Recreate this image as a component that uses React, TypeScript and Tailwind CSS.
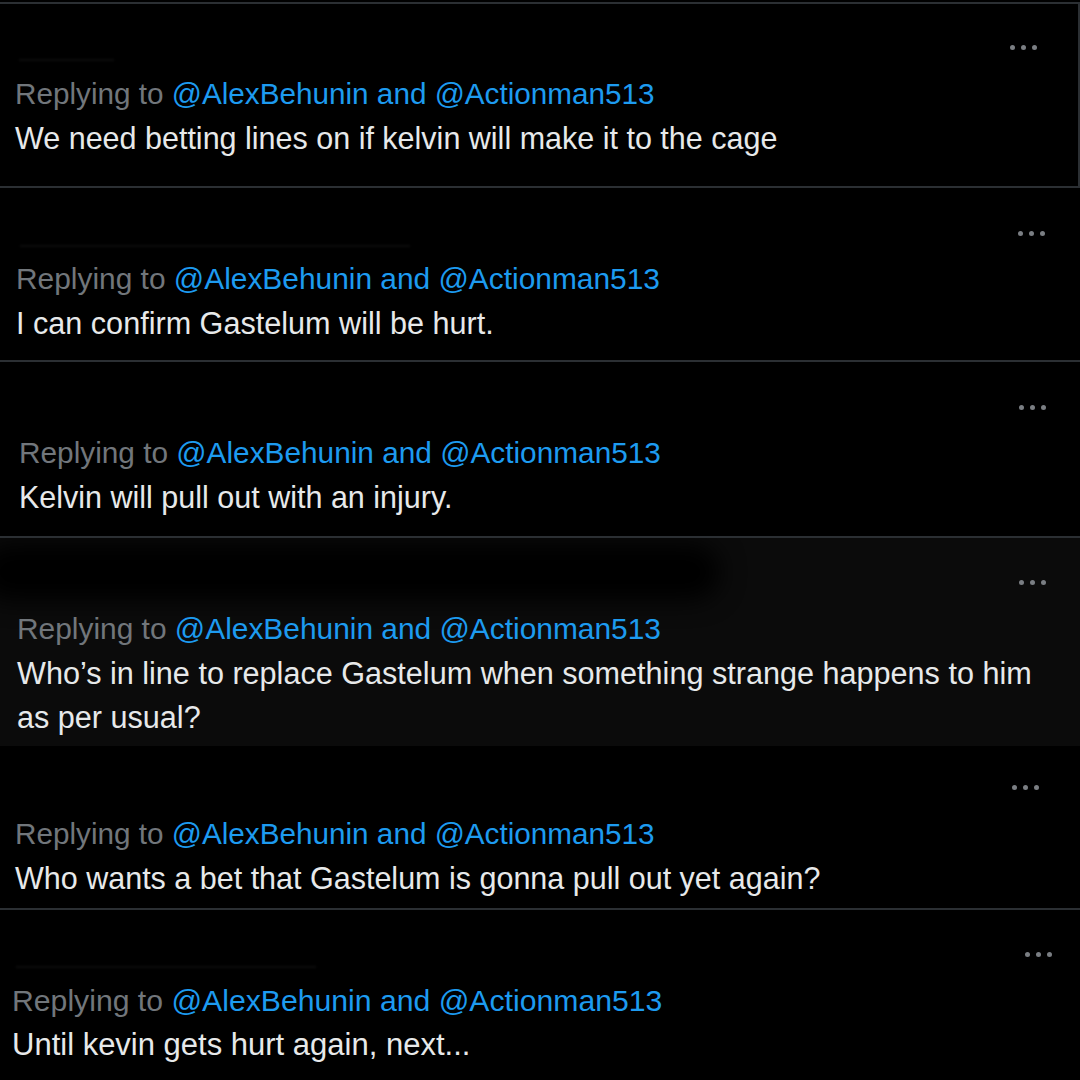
import React from 'react';

interface Reply {
  lines: string[];
  pt: string;
  gap: string;
  pb: string;
  pl: string;
  pr: string;
  className: string;
  head: string;
  body: string;
  smudge?: string;
  blob?: boolean;
}

const replies: Reply[] = [
  {
    lines: ['We need betting lines on if kelvin will make it to the cage'],
    pt: 'pt-[41px]',
    gap: 'mt-[22px]',
    pb: 'pb-[26px]',
    pl: 'pl-[15px]',
    pr: 'pr-[41px]',
    className: 'mt-[2px] border-t-2 border-r-2 border-b-2 border-[#2b2f33]',
    head: 'text-[29.7px]',
    body: 'text-[30.5px]',
    smudge: 'w-[95px]',
  },
  {
    lines: ['I can confirm Gastelum will be hurt.'],
    pt: 'pt-[43px]',
    gap: 'mt-[21px]',
    pb: 'pb-[15px]',
    pl: 'pl-[16px]',
    pr: 'pr-[35px]',
    className: 'border-b-2 border-[#2b2f33]',
    head: 'text-[29.9px]',
    body: 'text-[30.6px]',
    smudge: 'w-[390px]',
  },
  {
    lines: ['Kelvin will pull out with an injury.'],
    pt: 'pt-[43px]',
    gap: 'mt-[21px]',
    pb: 'pb-[17px]',
    pl: 'pl-[19px]',
    pr: 'pr-[34px]',
    className: 'border-b-2 border-[#2b2f33]',
    head: 'text-[29.8px]',
    body: 'text-[30.5px]',
  },
  {
    lines: ['Who’s in line to replace Gastelum when something strange happens to him', 'as per usual?'],
    pt: 'pt-[42px]',
    gap: 'mt-[22px]',
    pb: 'pb-[7px]',
    pl: 'pl-[17px]',
    pr: 'pr-[34px]',
    className: 'bg-[#0b0b0b]',
    head: 'text-[29.9px]',
    body: 'text-[30.6px]',
    blob: true,
  },
  {
    lines: ['Who wants a bet that Gastelum is gonna pull out yet again?'],
    pt: 'pt-[39px]',
    gap: 'mt-[22px]',
    pb: 'pb-[8px]',
    pl: 'pl-[15px]',
    pr: 'pr-[41px]',
    className: 'border-b-2 border-[#2b2f33]',
    head: 'text-[29.7px]',
    body: 'text-[30.5px]',
  },
  {
    lines: ['Until kevin gets hurt again, next...'],
    pt: 'pt-[42px]',
    gap: 'mt-[22px]',
    pb: 'pb-[12px]',
    pl: 'pl-[12px]',
    pr: 'pr-[28px]',
    className: '',
    head: 'text-[30.2px]',
    body: 'text-[31px]',
    smudge: 'w-[300px]',
  },
];

const MoreDots = () => (
  <div className="flex items-center gap-[6px]">
    <span className="w-[5px] h-[5px] rounded-full bg-[#7a7e83]" />
    <span className="w-[5px] h-[5px] rounded-full bg-[#7a7e83]" />
    <span className="w-[5px] h-[5px] rounded-full bg-[#7a7e83]" />
  </div>
);

const ReplyRow = ({ r }: { r: Reply }) => (
  <div className={`relative overflow-hidden ${r.className} ${r.pt} ${r.pb} ${r.pl} ${r.pr}`}>
    {r.blob && (
      <div className="absolute left-[-20px] top-[6px] w-[740px] h-[56px] rounded-full bg-black blur-md" />
    )}
    <div className="relative flex items-center justify-end h-[5px]">
      {r.smudge && (
        <div className={`absolute left-[4px] top-[14px] h-[2px] ${r.smudge} bg-[#0c0c0c] blur-[1px]`} />
      )}
      <MoreDots />
    </div>
    <div className={`relative ${r.gap}`}>
      <div className={`${r.head} leading-[44px] whitespace-nowrap`}>
        <span className="text-[#71767b]">Replying to </span>
        <span className="text-[#1d9bf0]">@AlexBehunin and @Actionman513</span>
      </div>
      {r.lines.map((line) => (
        <div key={line} className={`${r.body} leading-[44px] text-[#e7e9ea] whitespace-nowrap`}>
          {line}
        </div>
      ))}
    </div>
  </div>
);

export default function App() {
  return (
    <div
      className="w-[1080px] h-[1080px] overflow-hidden bg-black"
      style={{ fontFamily: '"Liberation Sans", Arial, sans-serif' }}
    >
      {replies.map((r, i) => (
        <ReplyRow key={i} r={r} />
      ))}
    </div>
  );
}
